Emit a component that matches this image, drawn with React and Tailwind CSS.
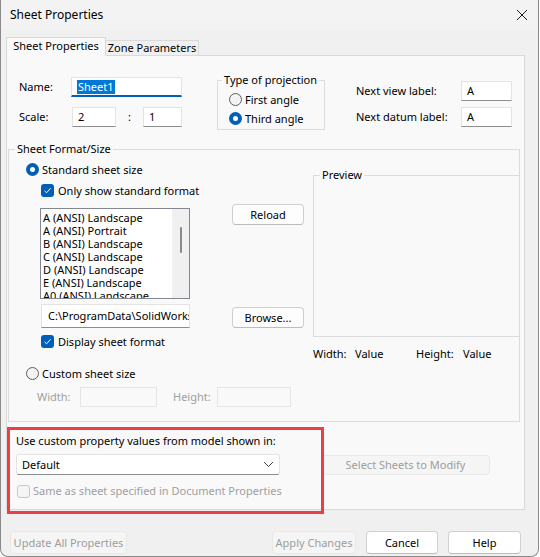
import React from "react";

const sheetSizes = [
  "A (ANSI) Landscape",
  "A (ANSI) Portrait",
  "B (ANSI) Landscape",
  "C (ANSI) Landscape",
  "D (ANSI) Landscape",
  "E (ANSI) Landscape",
  "A0 (ANSI) Landscape",
];

function Radio({ checked }) {
  if (checked) {
    return (
      <span className="w-[13px] h-[13px] rounded-full bg-[#005fb8] flex items-center justify-center shrink-0">
        <span className="w-[5px] h-[5px] rounded-full bg-white" />
      </span>
    );
  }
  return <span className="w-[13px] h-[13px] rounded-full border border-[#5d5d5d] bg-[#f3f3f3] shrink-0" />;
}

function Check({ checked, disabled }) {
  if (checked) {
    return (
      <span className="w-[13px] h-[13px] rounded-[3px] bg-[#005fb8] flex items-center justify-center shrink-0">
        <svg width="9" height="9" viewBox="0 0 9 9" fill="none">
          <path d="M1.5 4.8 L3.6 6.8 L7.6 2.2" stroke="white" strokeWidth="1" />
        </svg>
      </span>
    );
  }
  return (
    <span
      className={`w-[13px] h-[13px] rounded-[3px] border shrink-0 ${
        disabled ? "border-[#c8c8c8] bg-[#f5f5f5]" : "border-[#5d5d5d] bg-white"
      }`}
    />
  );
}

function TextBox({ className = "", value, disabled }) {
  return (
    <div
      className={`h-[20px] border border-[#e3e3e3] flex items-center pl-[5px] ${
        disabled ? "bg-[#f9f9f9] border-[#e5e5e5]" : "bg-white border-b-[#8d8d8d]"
      } ${className}`}
    >
      {value}
    </div>
  );
}

function Button({ children, className = "", disabled }) {
  return (
    <div
      className={`flex items-center justify-center rounded-[4px] border whitespace-nowrap ${
        disabled
          ? "bg-[#f5f5f5] border-[#e8e8e8] text-[#9d9d9d]"
          : "bg-[#fdfdfd] border-[#d0d0d0] border-b-[#bcbcbc] text-black"
      } ${className}`}
    >
      {children}
    </div>
  );
}

export default function App() {
  return (
    <div className="relative w-[540px] h-[557px] bg-white font-['Noto_Sans',sans-serif] text-[11px] leading-[16px] text-black">
      <div className="w-[539px] h-[557px] bg-[#f0f0f0] border-x border-b border-[#8a8a8a] rounded-b-[8px] flex flex-col overflow-hidden">
        {/* title bar */}
        <div className="h-[30px] shrink-0 bg-[#f3f3f3] flex items-center justify-between pl-[9px] pr-[9px]">
          <span className="text-[12px]">Sheet Properties</span>
          <svg width="12" height="12" viewBox="0 0 12 12" className="mr-[1px]">
            <path d="M1 1 L11 11 M11 1 L1 11" stroke="#1a1a1a" strokeWidth="1" />
          </svg>
        </div>

        <div className="flex-1 flex flex-col px-[5px]">
          {/* tabs */}
          <div className="flex items-end h-[18px] mt-[7px]">
            <div className="relative z-10 w-[100px] h-[19px] -mb-[1px] bg-[#f9f9f9] border-x border-t border-[#d9d9d9] flex items-center justify-center pb-[2px]">
              Sheet Properties
            </div>
            <div className="w-[93px] h-[15px] bg-[#f0f0f0] border-r border-t border-[#d9d9d9] flex items-center justify-center">
              Zone Parameters
            </div>
          </div>

          {/* tab panel */}
          <div className="w-[519px] h-[455px] border border-[#d9d9d9] bg-[#f9f9f9] flex flex-col">
            {/* top section */}
            <div className="h-[85px] shrink-0 flex items-start pt-[16px]">
              <div className="ml-[12px] mt-[5px] flex flex-col gap-[10px]">
                <div className="flex items-center h-[20px]">
                  <span className="w-[52px]">Name:</span>
                  <div className="w-[111px] h-[20px] bg-white border border-[#e3e3e3] border-b-2 border-b-[#005fb8] flex items-center pl-[5px]">
                    <span className="bg-[#0078d7] text-white px-[1px] leading-[14px]">Sheet1</span>
                  </div>
                </div>
                <div className="flex items-center h-[20px]">
                  <span className="w-[53px]">Scale:</span>
                  <TextBox className="w-[44px]" value="2" />
                  <span className="w-[27px] text-center">:</span>
                  <TextBox className="w-[39px]" value="1" />
                </div>
              </div>

              <fieldset className="ml-[35px] w-[108px] h-[58px] shrink-0 border border-[#dcdcdc]">
                <legend className="ml-[4px] px-[2px] leading-[16px] whitespace-nowrap">Type of projection</legend>
                <div className="pl-[11px] pt-[2px]">
                  <div className="flex items-center gap-[3px] h-[19px]">
                    <Radio />
                    <span>First angle</span>
                  </div>
                  <div className="flex items-center gap-[3px] h-[19px]">
                    <Radio checked />
                    <span>Third angle</span>
                  </div>
                </div>
              </fieldset>

              <div className="ml-[31px] mt-[9px] flex flex-col gap-[7px]">
                <div className="flex items-center h-[19px]">
                  <span className="w-[105px]">Next view label:</span>
                  <TextBox className="w-[51px] h-[19px]" value="A" />
                </div>
                <div className="flex items-center h-[19px]">
                  <span className="w-[105px]">Next datum label:</span>
                  <TextBox className="w-[51px] h-[19px]" value="A" />
                </div>
              </div>
            </div>

            {/* sheet format / size */}
            <fieldset className="ml-[1px] w-[512px] h-[281px] shrink-0 border border-[#dcdcdc] flex">
              <legend className="ml-[6px] px-[2px] leading-[16px]">Sheet Format/Size</legend>
              <div className="flex w-full">
                <div className="w-[304px] shrink-0 flex flex-col">
                  <div className="mt-[3px] pl-[17px] h-[19px] flex items-center gap-[3px]">
                    <Radio checked />
                    <span>Standard sheet size</span>
                  </div>
                  <div className="mt-[2px] pl-[32px] h-[19px] flex items-center gap-[4px]">
                    <Check checked />
                    <span>Only show standard format</span>
                  </div>
                  <div className="mt-[4px] pl-[31px] flex">
                    <div className="flex flex-col mt-[4px]">
                      <div className="w-[150px] h-[91px] border border-[#828790] bg-white flex overflow-hidden">
                        <div className="flex-1 pl-[2px] pt-[2px] leading-[13px] whitespace-nowrap overflow-hidden">
                          {sheetSizes.map((s) => (
                            <div key={s}>{s}</div>
                          ))}
                        </div>
                        <div className="w-[17px] bg-[#f0f0f0] flex justify-center pt-[18px]">
                          <div className="w-[2px] h-[26px] rounded-full bg-[#8a8a8a]" />
                        </div>
                      </div>
                      <div className="mt-[5px] ml-[1px] w-[149px] h-[24px] bg-white border border-[#e3e3e3] border-b-[#8d8d8d] flex items-center pl-[6px] overflow-hidden whitespace-nowrap">
                        C:\ProgramData\SolidWorks
                      </div>
                    </div>
                    <div className="ml-[42px] flex flex-col">
                      <Button className="w-[72px] h-[21px]">Reload</Button>
                      <Button className="w-[72px] h-[21px] mt-[82px]">Browse...</Button>
                    </div>
                  </div>
                  <div className="mt-[4px] pl-[32px] h-[19px] flex items-center gap-[4px]">
                    <Check checked />
                    <span>Display sheet format</span>
                  </div>
                  <div className="mt-[13px] pl-[17px] h-[19px] flex items-center gap-[3px]">
                    <Radio />
                    <span>Custom sheet size</span>
                  </div>
                  <div className="mt-[4px] pl-[28px] h-[20px] flex items-center text-[#a0a0a0]">
                    <span className="w-[43px]">Width:</span>
                    <TextBox className="w-[77px]" disabled />
                    <span className="ml-[16px] w-[44px]">Height:</span>
                    <TextBox className="w-[74px]" disabled />
                  </div>
                </div>

                <div className="flex-1 flex flex-col">
                  <fieldset className="mt-[10px] h-[170px] border border-r-0 border-[#dcdcdc]">
                    <legend className="ml-[6px] px-[2px] leading-[16px]">Preview</legend>
                  </fieldset>
                  <div className="mt-[9px] h-[16px] flex items-center">
                    <span className="w-[42px]">Width:</span>
                    <span className="w-[61px]">Value</span>
                    <span className="w-[47px]">Height:</span>
                    <span>Value</span>
                  </div>
                </div>
              </div>
            </fieldset>

            {/* custom property section */}
            <div className="pl-[9px] flex flex-col">
              <div className="mt-[11px] h-[16px] flex items-center">
                Use custom property values from model shown in:
              </div>
              <div className="mt-[5px] flex items-start">
                <div className="w-[264px] h-[21px] bg-white border border-[#e3e3e3] border-b-[#8d8d8d] rounded-[3px] flex items-center justify-between pl-[5px] pr-[5px]">
                  <span>Default</span>
                  <svg width="11" height="7" viewBox="0 0 11 7" fill="none">
                    <path d="M1 1 L5.5 5.5 L10 1" stroke="#444" strokeWidth="1" />
                  </svg>
                </div>
                <Button disabled className="ml-[41px] mt-[1px] w-[169px] h-[20px]">
                  Select Sheets to Modify
                </Button>
              </div>
              <div className="mt-[8px] ml-[1px] h-[16px] flex items-center gap-[3px] text-[#a0a0a0]">
                <Check disabled />
                <span>Same as sheet specified in Document Properties</span>
              </div>
            </div>
          </div>

          {/* dialog buttons */}
          <div className="mt-[21px] flex items-center">
            <Button disabled className="ml-[4px] w-[117px] h-[23px]">
              Update All Properties
            </Button>
            <div className="ml-auto mr-[12px] flex gap-[10px]">
              <Button disabled className="w-[84px] h-[23px]">Apply Changes</Button>
              <Button className="w-[72px] h-[23px] bg-white">Cancel</Button>
              <Button className="w-[73px] h-[23px] bg-white">Help</Button>
            </div>
          </div>
        </div>
      </div>

      {/* red annotation box */}
      <div className="absolute left-[7px] top-[427px] w-[317px] h-[87px] border-[3px] border-[#ee3e45]" />
    </div>
  );
}
